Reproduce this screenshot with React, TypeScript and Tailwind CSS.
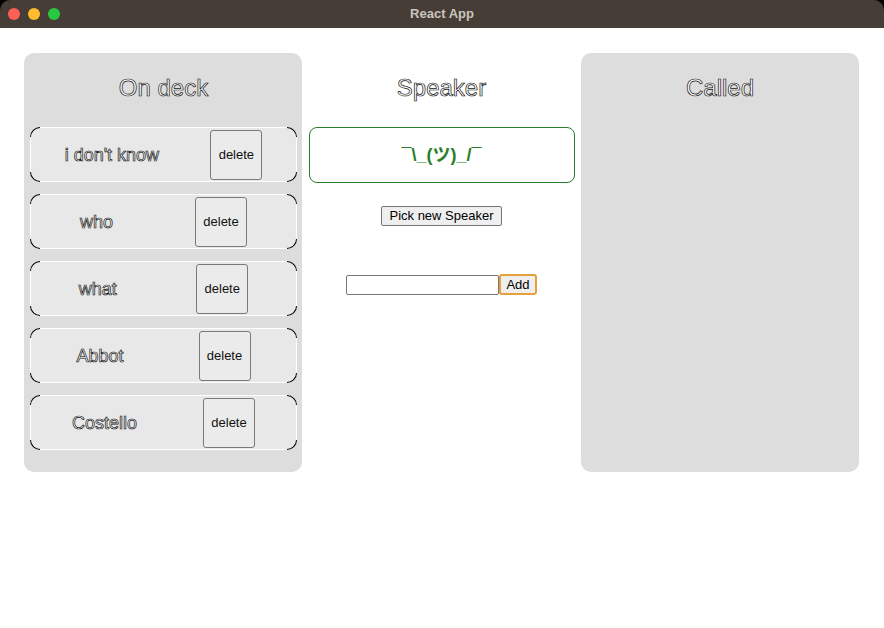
import React from "react";

const outline = "text-white [-webkit-text-stroke:0.7px_#111]";

function Corners() {
  return (
    <>
      <span className="absolute -top-px -left-px w-[10px] h-[10px] border-l border-t border-black rounded-tl-[10px]" />
      <span className="absolute -top-px -right-px w-[10px] h-[10px] border-r border-t border-black rounded-tr-[10px]" />
      <span className="absolute -bottom-px -left-px w-[10px] h-[10px] border-l border-b border-black rounded-bl-[10px]" />
      <span className="absolute -bottom-px -right-px w-[10px] h-[10px] border-r border-b border-black rounded-br-[10px]" />
    </>
  );
}

function Card({ name }: { name: string }) {
  return (
    <div className="relative h-[55px] flex items-center justify-around px-[8px] bg-[#e8e8e8] border border-white rounded-[10px]">
      <Corners />
      <span className={`text-[18px] leading-[22px] ${outline}`}>{name}</span>
      <button className="w-[52px] h-[50px] bg-[#ebebeb] border border-[#7a7a7a] rounded-[3px] text-[13px] text-[#111]">
        delete
      </button>
    </div>
  );
}

export default function App() {
  const items = ["i don't know", "who", "what", "Abbot", "Costello"];
  return (
    <div className="w-[884px] h-[628px] bg-black" style={{ fontFamily: '"Liberation Sans", "Noto Sans CJK JP", Arial, sans-serif' }}>
      <div className="relative h-[28px] bg-[#463d36] rounded-t-[10px] flex items-center justify-center">
        <div className="absolute left-[8px] top-[8px] flex gap-[8px]">
          <span className="w-[12px] h-[12px] rounded-full bg-[#fe5f57]" />
          <span className="w-[12px] h-[12px] rounded-full bg-[#febc2e]" />
          <span className="w-[12px] h-[12px] rounded-full bg-[#28c840]" />
        </div>
        <span className="text-[13px] font-bold text-[#cbc5bf]">React App</span>
      </div>
      <div className="h-[600px] bg-white pt-[25px] px-[24px]">
        <div className="grid grid-cols-[278px_279px_278px]">
          <div className="bg-[#dddddd] rounded-[10px] pt-[21px] pb-[22px] pl-[6px] pr-[5px]">
            <h2 className={`text-[24px] leading-[28px] text-center mb-[25px] ${outline}`}>On deck</h2>
            <div className="flex flex-col gap-[12px]">
              {items.map((n) => (
                <Card key={n} name={n} />
              ))}
            </div>
          </div>
          <div className="pt-[21px] px-[7px] flex flex-col items-center">
            <h2 className={`text-[24px] leading-[28px] text-center mb-[25px] ${outline}`}>Speaker</h2>
            <div className="w-[266px] h-[56px] border border-[#2a7d2a] rounded-[8px] flex items-center justify-center text-[18px] font-bold text-[#2a7d2a]">
              ¯\_(ツ)_/¯
            </div>
            <button className="mt-[23px] h-[20px] px-[7px] bg-[#efefef] border border-[#767676] rounded-[2px] text-[13px] text-black leading-[16px]">
              Pick new Speaker
            </button>
            <div className="mt-[48px] flex items-center">
              <input className="w-[153px] h-[20px] border border-[#767676] rounded-[2px] bg-white" />
              <button className="w-[38px] h-[21px] bg-[#efefef] border-2 border-[#e5a23a] rounded-[3px] text-[13px] text-black leading-[15px]">
                Add
              </button>
            </div>
          </div>
          <div className="bg-[#dddddd] rounded-[10px] pt-[21px] px-[6px]">
            <h2 className={`text-[24px] leading-[28px] text-center ${outline}`}>Called</h2>
          </div>
        </div>
      </div>
    </div>
  );
}
